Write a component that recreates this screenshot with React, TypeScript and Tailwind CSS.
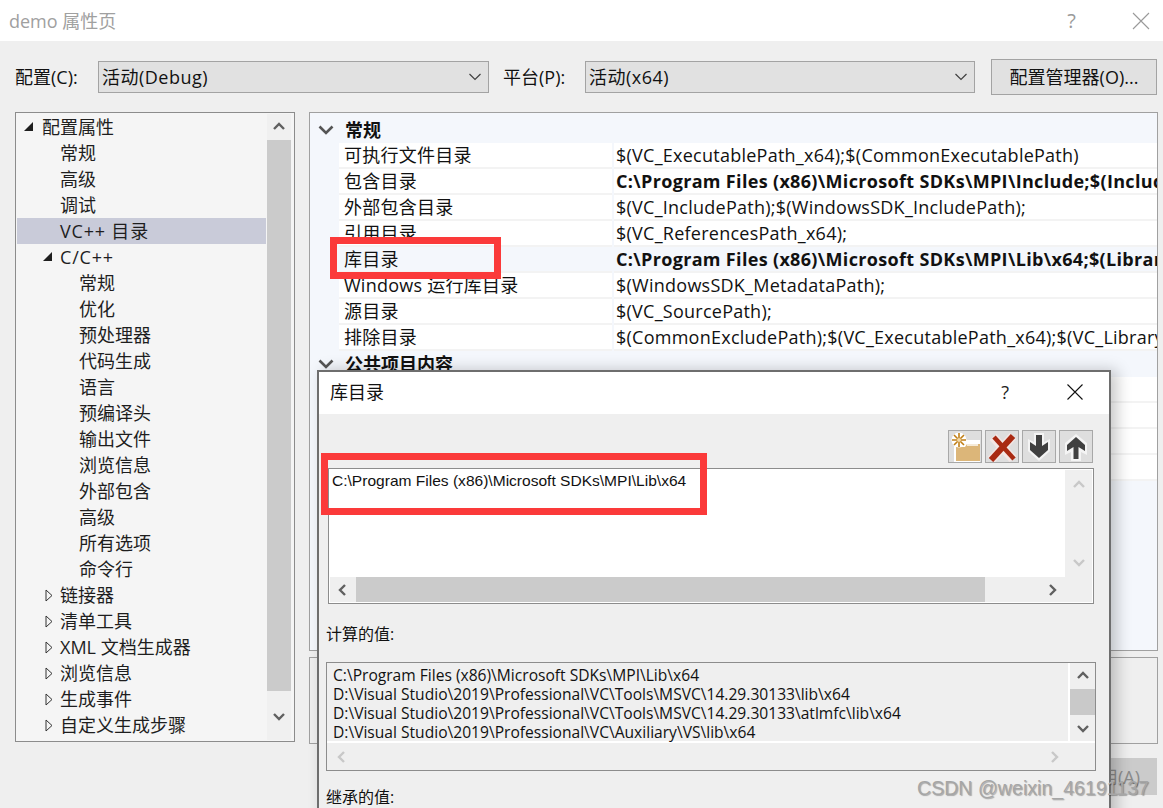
import React from 'react';

const FONT = '"Open Sans", "Noto Sans CJK SC", sans-serif';

const Chevron: React.FC<{ dir: 'up' | 'down' | 'left' | 'right'; color?: string }> = ({ dir, color = '#606060' }) => {
  const points = {
    up: '2,9 7,4 12,9',
    down: '2,5 7,10 12,5',
    left: '9,2 4,7 9,12',
    right: '5,2 10,7 5,12',
  }[dir];
  return (
    <svg width="14" height="14" viewBox="0 0 14 14" fill="none">
      <polyline points={points} stroke={color} strokeWidth="2.4" />
    </svg>
  );
};

type TreeItem = { label: string; indent: number; arrow?: 'open' | 'closed'; selected?: boolean; wide?: boolean; arrowLeft?: number };

const TreeRow: React.FC<TreeItem> = ({ label, indent, arrow, selected, wide, arrowLeft }) => (
  <div
    className={`relative flex h-[26px] shrink-0 items-center text-[18px] leading-none text-[#1e1e1e] ${selected ? 'bg-[#c9cbd9]' : ''} ${wide ? 'tracking-[0.8px]' : ''}`}
    style={{ paddingLeft: indent }}
  >
    {arrow === 'open' && (
      <svg className="absolute" style={{ left: arrowLeft, top: 8 }} width="10" height="10" viewBox="0 0 10 10">
        <polygon points="9,0 9,9 0,9" fill="#1e1e1e" />
      </svg>
    )}
    {arrow === 'closed' && (
      <svg className="absolute" style={{ left: indent - 15, top: 7 }} width="8" height="13" viewBox="0 0 8 13" fill="none">
        <polygon points="1,1 7,6.5 1,12" stroke="#333333" strokeWidth="1" />
      </svg>
    )}
    {label}
  </div>
);

const GridRow: React.FC<{ name: string; value: string; bold?: boolean; active?: boolean }> = ({
  name,
  value,
  bold,
  active,
}) => (
  <div className="flex h-[26px] shrink-0 pl-[29px] text-[18px] leading-none text-[#111111]">
    <div className={`flex w-[273px] shrink-0 items-center border-b-2 border-[#f3f3f3] pl-[5px] tracking-[0.25px] ${active ? 'bg-[#f4f7fc]' : 'bg-white'}`}>
      {name}
    </div>
    <div
      className={`ml-[2px] flex min-w-0 flex-1 items-center overflow-hidden whitespace-nowrap border-b-2 border-[#f3f3f3] pl-[2px] ${active ? 'bg-[#f4f7fc]' : 'bg-white'} ${bold ? 'font-bold tracking-[0.33px]' : 'tracking-[0.25px]'}`}
    >
      {value}
    </div>
  </div>
);

const GridHeader: React.FC<{ label: string }> = ({ label }) => (
  <div className="flex h-[26px] shrink-0 items-center bg-[#f4f7fc] text-[18px] font-bold leading-none text-[#111111]">
    <svg className="ml-[8px] mr-[11px]" width="16" height="12" viewBox="0 0 16 12" fill="none">
      <polyline points="1.5,2.5 8,9 14.5,2.5" stroke="#555555" strokeWidth="2.6" />
    </svg>
    {label}
  </div>
);

const treeItems: TreeItem[] = [
  { label: '配置属性', indent: 25, arrow: 'open', arrowLeft: 7 },
  { label: '常规', indent: 43 },
  { label: '高级', indent: 43 },
  { label: '调试', indent: 43 },
  { label: 'VC++ 目录', indent: 43, selected: true, wide: true },
  { label: 'C/C++', indent: 43, arrow: 'open', arrowLeft: 26, wide: true },
  { label: '常规', indent: 62 },
  { label: '优化', indent: 62 },
  { label: '预处理器', indent: 62 },
  { label: '代码生成', indent: 62 },
  { label: '语言', indent: 62 },
  { label: '预编译头', indent: 62 },
  { label: '输出文件', indent: 62 },
  { label: '浏览信息', indent: 62 },
  { label: '外部包含', indent: 62 },
  { label: '高级', indent: 62 },
  { label: '所有选项', indent: 62 },
  { label: '命令行', indent: 62 },
  { label: '链接器', indent: 43, arrow: 'closed' },
  { label: '清单工具', indent: 43, arrow: 'closed' },
  { label: 'XML 文档生成器', indent: 43, arrow: 'closed' },
  { label: '浏览信息', indent: 43, arrow: 'closed' },
  { label: '生成事件', indent: 43, arrow: 'closed' },
  { label: '自定义生成步骤', indent: 43, arrow: 'closed' },
];

const dirRows = [
  { name: '可执行文件目录', value: '$(VC_ExecutablePath_x64);$(CommonExecutablePath)' },
  { name: '包含目录', value: 'C:\\Program Files (x86)\\Microsoft SDKs\\MPI\\Include;$(IncludePath)', bold: true },
  { name: '外部包含目录', value: '$(VC_IncludePath);$(WindowsSDK_IncludePath);' },
  { name: '引用目录', value: '$(VC_ReferencesPath_x64);' },
  { name: '库目录', value: 'C:\\Program Files (x86)\\Microsoft SDKs\\MPI\\Lib\\x64;$(LibraryPath)', bold: true, active: true },
  { name: 'Windows 运行库目录', value: '$(WindowsSDK_MetadataPath);' },
  { name: '源目录', value: '$(VC_SourcePath);' },
  { name: '排除目录', value: '$(CommonExcludePath);$(VC_ExecutablePath_x64);$(VC_LibraryPath_x64)' },
];

const computedValues = [
  'C:\\Program Files (x86)\\Microsoft SDKs\\MPI\\Lib\\x64',
  'D:\\Visual Studio\\2019\\Professional\\VC\\Tools\\MSVC\\14.29.30133\\lib\\x64',
  'D:\\Visual Studio\\2019\\Professional\\VC\\Tools\\MSVC\\14.29.30133\\atlmfc\\lib\\x64',
  'D:\\Visual Studio\\2019\\Professional\\VC\\Auxiliary\\VS\\lib\\x64',
];

const Combo: React.FC<{ label: string; width: number }> = ({ label, width }) => (
  <div
    className="flex h-[32px] shrink-0 items-center justify-between border border-[#a3a3a3] bg-[#e1e1e1] pl-[3px] pr-[6px] text-[18px] leading-none tracking-[0.5px] text-[#111111]"
    style={{ width }}
  >
    {label}
    <svg width="14" height="10" viewBox="0 0 14 10" fill="none">
      <polyline points="1.5,2 7,7.5 12.5,2" stroke="#404040" strokeWidth="1.2" />
    </svg>
  </div>
);

const ToolButton: React.FC<{ children: React.ReactNode }> = ({ children }) => (
  <div className="flex h-[33px] w-[34px] items-center justify-center border border-[#a8a8a8] bg-[#dedede]">{children}</div>
);

const App: React.FC = () => {
  return (
    <div className="relative h-[808px] w-[1163px] overflow-hidden bg-[#efefef]" style={{ fontFamily: FONT }}>
      {/* Title bar */}
      <div className="flex h-[41px] items-center justify-between bg-white pl-[9px] pr-[13px] text-[18px] leading-none text-[#a0a0a0]">
        <span>demo 属性页</span>
        <div className="flex items-center gap-[56px]">
          <span className="text-[20px] text-[#9a9a9a]">?</span>
          <svg width="18" height="18" viewBox="0 0 18 18" fill="none">
            <path d="M1 1 L17 17 M17 1 L1 17" stroke="#9a9a9a" strokeWidth="1.1" />
          </svg>
        </div>
      </div>

      {/* Configuration row */}
      <div className="relative flex h-[71px] items-center pl-[15px] pr-[6px] text-[18px] leading-none text-[#111111]">
        <span className="w-[83px] shrink-0">配置(C):</span>
        <Combo label="活动(Debug)" width={391} />
        <span className="ml-[14px] w-[82px] shrink-0">平台(P):</span>
        <Combo label="活动(x64)" width={390} />
        <div className="ml-[16px] flex h-[36px] w-[166px] items-center justify-center border border-[#a3a3a3] bg-[#e1e1e1]">
          配置管理器(O)...
        </div>
      </div>

      <div className="flex pl-[15px] pr-[5px]">
        {/* Tree */}
        <div className="flex h-[630px] w-[280px] shrink-0 border border-[#8c8c8c] bg-[#f5f5f5] p-[1px]">
          <div className="flex w-[249px] shrink-0 flex-col">
            {treeItems.map((item, i) => (
              <TreeRow key={i} {...item} />
            ))}
          </div>
          <div className="ml-[1px] flex w-[24px] flex-col bg-[#f0f0f0]">
            <div className="flex h-[26px] shrink-0 items-center justify-center">
              <Chevron dir="up" />
            </div>
            <div className="h-[551px] bg-[#cbcbcb]" />
            <div className="flex flex-1 items-center justify-center">
              <Chevron dir="down" />
            </div>
          </div>
        </div>

        {/* Property grid and description */}
        <div className="ml-[14px] flex min-w-0 flex-1 flex-col">
          <div className="flex h-[539px] flex-col overflow-hidden border border-[#a0a0a0] bg-[#f4f7fc] pt-[4px]">
            <GridHeader label="常规" />
            {dirRows.map((r) => (
              <GridRow key={r.name} {...r} />
            ))}
            <GridHeader label="公共项目内容" />
            {[0, 1, 2, 3].map((i) => (
              <GridRow key={i} name="" value="" />
            ))}
          </div>
          <div className="mt-[6px] h-[87px] border border-[#a0a0a0] bg-[#efefef]" />
        </div>
      </div>

      {/* Faded button under the dialog */}
      <div className="absolute left-[1000px] top-[758px] flex h-[37px] w-[157px] items-center justify-end bg-[#cbcbcb] pr-[17px] text-[18px] leading-none text-[#8a8a8a]">
        应用(A)
      </div>

      {/* Library directories dialog */}
      <div className="absolute left-[317px] top-[370px] h-[460px] w-[794px] border-2 border-[#6e6e6e] bg-[#efefef] shadow-[6px_0_14px_rgba(0,0,0,0.22)]">
        <div className="flex h-[42px] items-center justify-between bg-white pb-[2px] pl-[11px] pr-[26px] text-[18px] leading-none text-[#111111]">
          <span>库目录</span>
          <div className="flex items-center gap-[58px]">
            <span className="text-[#222222]">?</span>
            <svg width="16" height="16" viewBox="0 0 16 16" fill="none">
              <path d="M0.5 0.5 L15.5 15.5 M15.5 0.5 L0.5 15.5" stroke="#111111" strokeWidth="1.1" />
            </svg>
          </div>
        </div>

        <div className="flex justify-end gap-[3px] pr-[16px] pt-[16px]">
          <ToolButton>
            <svg width="32" height="31" viewBox="0 0 32 31">
              <path d="M5 31 V12 H15 L17 9 H31 V31 Z" fill="white" />
              <path d="M7 30 V16 H31 V30 Z M18 13 H31 V16 H16 Z" fill="#dcb679" />
              <rect x="18" y="13" width="11" height="2" fill="#f5ead8" />
              <circle cx="10" cy="9" r="7.5" fill="white" />
              <path d="M10 2 V16 M3 9 H17 M5 4 L15 14 M15 4 L5 14" stroke="#c07f17" strokeWidth="1.6" />
              <circle cx="10" cy="9" r="2" fill="#f1d9a9" />
            </svg>
          </ToolButton>
          <ToolButton>
            <svg width="32" height="31" viewBox="0 0 32 31" fill="none">
              <path d="M7 6 L27 28 M27 5 L5 29" stroke="#f3e6e4" strokeWidth="9" />
              <path d="M8 6 L28 28" stroke="#a92a12" strokeWidth="4.5" />
              <path d="M27 5 L5 29" stroke="#a92a12" strokeWidth="6" />
            </svg>
          </ToolButton>
          <ToolButton>
            <svg width="22" height="28" viewBox="0 0 22 28">
              <path d="M6 0 H16 V9 L22 6 V18 L11 28 L0 18 V6 L6 9 Z" fill="#f4f4f4" />
              <path d="M8 2 H14 V13 L20 9 V17 L11 25 L2 17 V9 L8 13 Z" fill="#404040" />
            </svg>
          </ToolButton>
          <ToolButton>
            <svg width="22" height="28" viewBox="0 0 22 28">
              <path d="M6 28 H16 V19 L22 22 V10 L11 1 L0 10 V22 L6 19 Z" fill="#f4f4f4" />
              <path d="M8.5 26 H13.5 V14 L20 18 V12 L11 4 L2 12 V18 L8.5 14 Z" fill="#404040" />
            </svg>
          </ToolButton>
        </div>

        {/* Editable list */}
        <div className="ml-[9px] mt-[5px] h-[136px] w-[766px] border border-[#8c8c8c] bg-white p-[1px]">
          <div className="flex h-[107px]">
            <div className="flex-1 pl-[2px] pt-[1px] text-[15.55px] leading-[19px] text-[#111111]" style={{ fontFamily: '"Liberation Sans", sans-serif' }}>
              C:\Program Files (x86)\Microsoft SDKs\MPI\Lib\x64
            </div>
            <div className="flex w-[27px] flex-col items-center justify-between bg-[#efefef] pb-[8px] pt-[8px]">
              <Chevron dir="up" color="#c8c8c8" />
              <Chevron dir="down" color="#c8c8c8" />
            </div>
          </div>
          <div className="flex h-[25px] bg-[#efefef]">
            <div className="flex w-[26px] items-center justify-center">
              <Chevron dir="left" />
            </div>
            <div className="w-[629px] bg-[#cbcbcb]" />
            <div className="flex flex-1 items-center pl-[60px]">
              <Chevron dir="right" />
            </div>
          </div>
        </div>

        <div className="ml-[7px] mt-[20px] text-[16px] leading-[20px] text-[#111111]">计算的值:</div>

        {/* Computed values */}
        <div className="ml-[7px] mt-[18px] h-[109px] w-[770px] border border-[#8c8c8c] bg-[#efefef]">
          <div className="flex h-[80px] border-b-2 border-white">
            <div className="flex-1 border-r-2 border-white pl-[6px] pt-[3px] text-[15.6px] leading-[19px] text-[#111111]">
              {computedValues.map((v) => (
                <div key={v} className="whitespace-nowrap">
                  {v}
                </div>
              ))}
            </div>
            <div className="flex w-[25px] flex-col items-center">
              <div className="flex h-[26px] items-center justify-center">
                <Chevron dir="up" />
              </div>
              <div className="h-[26px] w-full bg-[#c9c9c9]" />
              <div className="flex h-[26px] items-center justify-center">
                <Chevron dir="down" />
              </div>
            </div>
          </div>
          <div className="flex h-[27px] items-center justify-between pl-[8px] pr-[34px]">
            <Chevron dir="left" color="#c8c8c8" />
            <Chevron dir="right" color="#c8c8c8" />
          </div>
        </div>

        <div className="ml-[7px] mt-[16px] text-[16px] leading-[20px] text-[#111111]">继承的值:</div>
      </div>

      {/* Red annotation boxes */}
      <div className="absolute left-[330px] top-[237px] h-[42px] w-[171px] border-[7px] border-[#fb3a3a]" />
      <div className="absolute left-[321px] top-[453px] h-[62px] w-[386px] border-[7px] border-[#fb3a3a]" />

      {/* Watermark */}
      <div
        className="absolute left-[917px] top-[776px] text-[19.6px] leading-[24px] text-[#a6a6a6] [text-shadow:1px_1px_1px_rgba(0,0,0,0.3)]"
        style={{ fontFamily: '"Liberation Sans", sans-serif' }}
      >
        CSDN @weixin_46191137
      </div>
    </div>
  );
};

export default App;
